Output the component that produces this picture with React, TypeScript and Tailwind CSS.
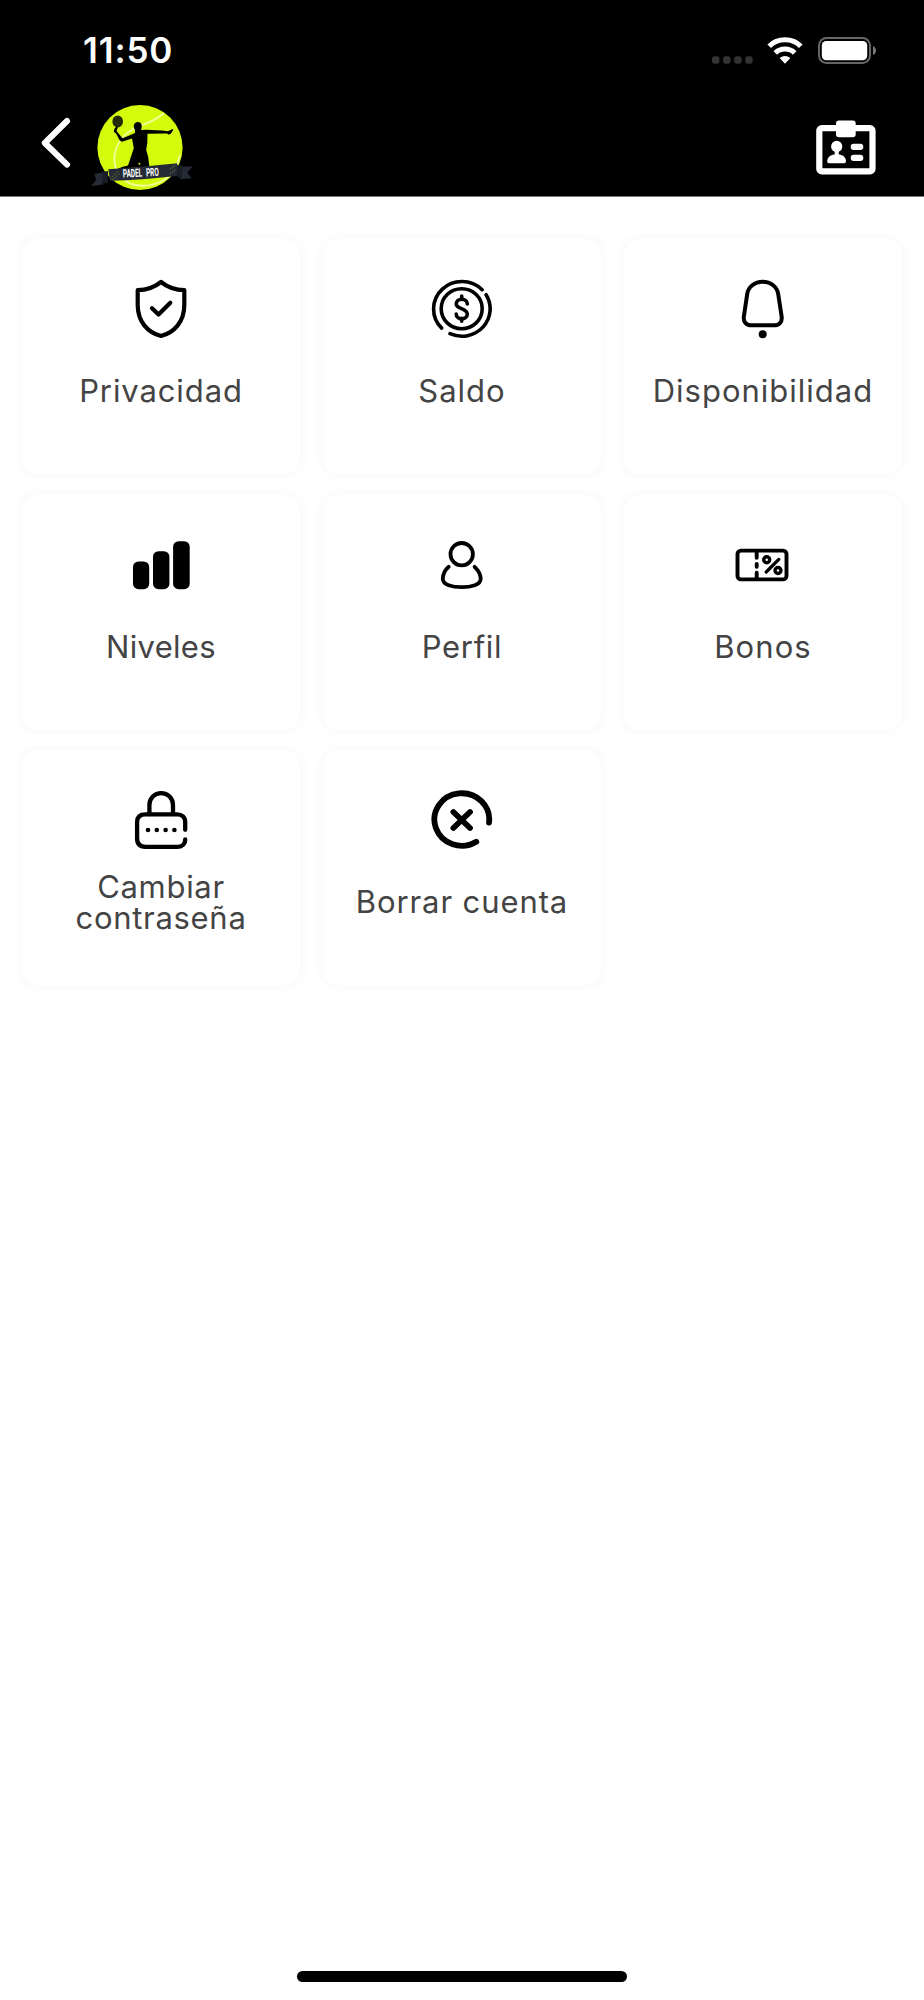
import type { ReactNode } from 'react';

interface MenuItem {
  label: string;
  tracking: string;
  icon: ReactNode;
}

const menuItems: MenuItem[] = [
  {
    label: 'Privacidad',
    tracking: 'tracking-[0.9px]',
    icon: (
      <g strokeWidth="4.2">
        <path d="M32 3 Q22 11 8.7 11.2 V26 C8.7 43 19 53.5 32 57 C45 53.5 55.3 43 55.3 26 V11.2 Q42 11 32 3 Z" />
        <path d="M23 29.3 L29.5 35.5 L41.3 23.7" />
      </g>
    ),
  },
  {
    label: 'Saldo',
    tracking: 'tracking-[1px]',
    icon: (
      <g strokeWidth="3.6">
        <path d="M11.7 49.1 A28.3 27.4 0 1 1 52.1 10.7" />
        <path d="M56.1 15.7 A28.3 27.4 0 0 1 20 54.7" />
        <ellipse cx="31.7" cy="29.7" rx="20.5" ry="20" />
        <path d="M37.3 25 C37.3 18.6 26.2 18.6 26.2 25 C26.2 30 37.3 29.4 37.3 35 C37.3 41.2 26.2 41.2 26.2 35" />
        <path d="M31.7 17 V20 M31.7 39.5 V42.3" />
      </g>
    ),
  },
  {
    label: 'Disponibilidad',
    tracking: 'tracking-[1px]',
    icon: (
      <g strokeWidth="4">
        <path d="M31.7 2.8 C23.5 2.8 17.3 7.8 16.2 15 L12.8 38 C12.2 43 15.5 46.3 20.5 46.3 H43 C48 46.3 51.3 43 50.7 38 L47.2 15 C46.1 7.8 39.9 2.8 31.7 2.8 Z" />
        <circle cx="31.7" cy="55.2" r="4" fill="black" stroke="none" />
      </g>
    ),
  },
  {
    label: 'Niveles',
    tracking: 'tracking-[0.3px]',
    icon: (
      <g fill="black" stroke="none">
        <rect x="4" y="26.5" width="16.2" height="27.7" rx="5.5" />
        <rect x="24" y="16.2" width="16.4" height="38" rx="5.5" />
        <rect x="44.1" y="6.2" width="16.6" height="48" rx="5.5" />
      </g>
    ),
  },
  {
    label: 'Perfil',
    tracking: 'tracking-[0.7px]',
    icon: (
      <g strokeWidth="3.8">
        <circle cx="31.7" cy="19.2" r="11.2" />
        <path d="M18.7 31.8 C15 35 12.8 39.5 12.8 44 C12.8 49.5 22 52.2 31.7 52.2 C41.4 52.2 50.7 49.5 50.7 44 C50.7 39.5 48 35 44.6 31.8" />
      </g>
    ),
  },
  {
    label: 'Bonos',
    tracking: 'tracking-[1.1px]',
    icon: (
      <g strokeWidth="3.9">
        <rect x="6.5" y="15.6" width="49" height="28.8" rx="3.5" />
        <path d="M25.7 17 V22.8 M25.7 29 V31.8 M25.7 37.8 V43.5" />
        <circle cx="35.7" cy="24.8" r="3" strokeWidth="3.4" />
        <circle cx="47" cy="35.5" r="3" strokeWidth="3.4" />
        <path d="M47.8 24.4 L35.2 37" strokeWidth="3.3" />
      </g>
    ),
  },
  {
    label: 'Cambiar contraseña',
    tracking: 'tracking-[0.7px]',
    icon: (
      <g strokeWidth="4.3">
        <path d="M20.4 24 V15 C20.4 8 25.6 3.1 32.2 3.1 C38.8 3.1 44 8 44 15 V24" />
        <path d="M56.2 39.8 V32 C56.2 27 53 24.3 48 24.3 H16.5 C11 24.3 8.1 27 8.1 32 V48.5 C8.1 54 11 56.8 16.5 56.8 H48 C53 56.8 56.2 54 56.2 49.4" />
        <g fill="black" stroke="none">
          <circle cx="19" cy="40" r="2.3" />
          <circle cx="27.8" cy="40" r="2.3" />
          <circle cx="36.6" cy="40" r="2.3" />
          <circle cx="45.4" cy="40" r="2.3" />
        </g>
      </g>
    ),
  },
  {
    label: 'Borrar cuenta',
    tracking: 'tracking-[0.9px]',
    icon: (
      <g strokeWidth="5.8">
        <path d="M59 32.7 A27.4 26.2 0 1 0 46.3 51.7" />
        <path d="M23.4 22 L40 38 M40 22 L23.4 38" />
      </g>
    ),
  },
];

function StatusBar() {
  return (
    <div className="flex h-[101px] items-center justify-between pl-[83px] pr-12">
      <span className="font-['Inter',sans-serif] text-[35px] font-semibold leading-none tracking-[0.9px] text-white">
        11:50
      </span>
      <div className="flex items-center">
        <svg className="h-[27px] w-[42px]" viewBox="0 0 42 27" fill="#333333">
          <rect x="0" y="19.3" width="7.4" height="7.4" rx="2.4" />
          <rect x="11.1" y="19.3" width="7.4" height="7.4" rx="2.4" />
          <rect x="22.2" y="19.3" width="7.4" height="7.4" rx="2.4" />
          <rect x="33.3" y="19.3" width="7.4" height="7.4" rx="2.4" />
        </svg>
        <svg className="ml-[13px] h-[27px] w-[36px]" viewBox="0 0 36 27" fill="none" stroke="white">
          <path d="M2.2 9.2 C10.5 0.6 25.5 0.6 33.8 9.2" strokeWidth="5" />
          <path d="M8.3 16 C13.5 10.8 22.5 10.8 27.7 16" strokeWidth="5" />
          <path d="M12.6 21 Q18 16.8 23.4 21 L18 26.8 Z" fill="white" stroke="none" />
        </svg>
        <svg className="ml-[15px] h-[27px] w-[58px]" viewBox="0 0 58 27">
          <rect x="1" y="1" width="51" height="25" rx="7.5" fill="none" stroke="#666666" strokeWidth="2" />
          <rect x="3.8" y="3.9" width="45.4" height="19.4" rx="4.5" fill="white" />
          <path d="M55 9 Q58 10.5 58 13.5 Q58 16.5 55 18 Z" fill="#777777" />
        </svg>
      </div>
    </div>
  );
}

function Logo() {
  return (
    <svg className="h-[95px] w-[108px]" viewBox="0 0 108 95">
      <circle cx="52" cy="46.5" r="42.6" fill="#d4fb0b" />
      <path
        d="M76 12 C62 25 48 22 36 35 C24 48 23 66 34 77 C44 87 62 87 76 79 C84 74 90 64 92 54"
        fill="none"
        stroke="#f3ff9c"
        strokeWidth="1.8"
      />
      <g fill="black">
        <ellipse cx="29.7" cy="20.5" rx="5.3" ry="5.9" fill="#252b06" />
        <path d="M28.6 25.5 L30 26 L28.6 30 L31 33 L34.5 37.2 L42.5 34 L47 32 V29 C45 26 45.3 21.2 49.8 21 C54 21.2 54.5 25 53 29 L58 28.8 L74 29.6 L80 30.2 L84.5 28 L85.3 29 L82.5 33 L80.5 33.5 L79 32.5 L59.5 32.8 L59.3 42 L58.2 49 L60.2 56 L61.4 66 L41 67 L30 74 L24 75 L25.5 70 L34 66 L40 64.5 L44.2 52 L45.8 47 L44 37.5 L34 40.8 L31.8 39.5 L28 32.5 L25.7 30.5 L26.5 27.5 Z" />
      </g>
      <circle cx="51.4" cy="62.8" r="1" fill="#d4fb0b" />
      <g fill="#252b36">
        <path d="M6.3 73 L15 71.5 V83.5 L3 85 L8.2 79 Z" />
        <path d="M93 66 L104.8 65.2 L99.3 71.7 L103.8 77.3 L92 78.2 Z" />
        <path d="M14.2 70.8 L20 70 V81.8 L14.2 82 Z" fill="#1a1e27" />
        <path d="M88.5 64 L95 64.6 L93.5 77.5 L88 75 Z" fill="#1a1e27" />
        <path d="M20.3 68.3 Q55 66 89.3 62.3 L88.3 75 Q54 79 22 79.7 Z" />
      </g>
      <path d="M22 78 L30 70 M24 79 L32 72 M82 68 L88 64 M82 73 L88 68" stroke="#78901a" strokeWidth="0.8" strokeDasharray="1.5 1" />
      <text
        x="35"
        y="76.5"
        fill="white"
        fontSize="11.5"
        fontWeight="700"
        fontFamily="'Roboto', 'Liberation Sans', sans-serif"
        textLength="36"
        lengthAdjust="spacingAndGlyphs"
        wordSpacing="4"
        transform="rotate(-2.5 35 76.5)"
      >
        PADEL PRO
      </text>
    </svg>
  );
}

function NavBar() {
  return (
    <div className="flex h-[95px] items-start pl-10 pr-12">
      <svg className="h-[84px] w-8" viewBox="0 0 32 84" fill="none" stroke="white" strokeWidth="6" strokeLinecap="round" strokeLinejoin="round">
        <path d="M27 20 L4.8 42 L27 63.7" />
      </svg>
      <div className="ml-4">
        <Logo />
      </div>
      <svg className="ml-auto mt-[19px] h-[55px] w-[60px]" viewBox="0 0 60 55" fill="white">
        <rect x="3.3" y="8.2" width="53.2" height="43.2" rx="2.5" fill="none" stroke="white" strokeWidth="6.2" />
        <rect x="20" y="0.4" width="19.7" height="16.8" rx="3" />
        <ellipse cx="20.7" cy="26.5" rx="5.6" ry="5.8" />
        <path d="M18.7 30 H22.7 V34.2 C27.5 35 30 37.5 30 41.5 Q30 43.3 28.3 43.3 H13 Q11.2 43.3 11.2 41.5 C11.2 37.5 14 35 18.7 34.2 Z" />
        <rect x="34.7" y="23.7" width="12.6" height="6.2" rx="3" />
        <rect x="34.7" y="34.7" width="12.6" height="6.2" rx="3" />
      </svg>
    </div>
  );
}

function MenuCard({ item }: { item: MenuItem }) {
  return (
    <button className="flex h-[235px] flex-col items-center rounded-[16px] bg-white pt-10 shadow-[0_0_14px_rgba(0,0,0,0.045)]">
      <svg
        className="h-[60px] w-16 shrink-0"
        viewBox="0 0 64 60"
        fill="none"
        stroke="black"
        strokeLinecap="round"
        strokeLinejoin="round"
      >
        {item.icon}
      </svg>
      <span className="mt-5 flex h-16 w-[236px] items-center justify-center">
        <span className={`text-center text-[31px] font-normal leading-[31.5px] text-[#444444] ${item.tracking}`}>
          {item.label}
        </span>
      </span>
    </button>
  );
}

export default function App() {
  return (
    <div className="flex h-[2000px] w-full flex-col bg-white font-['Inter','Liberation_Sans',sans-serif]">
      <header className="border-b border-[#777777] bg-black">
        <StatusBar />
        <NavBar />
      </header>
      <main className="grid grid-cols-3 gap-x-[23px] gap-y-[20.5px] px-[22px] pt-[42px]">
        {menuItems.map((item) => (
          <MenuCard key={item.label} item={item} />
        ))}
      </main>
      <div className="mx-auto mb-[18px] mt-auto h-[11px] w-[330px] rounded-full bg-black" />
    </div>
  );
}
